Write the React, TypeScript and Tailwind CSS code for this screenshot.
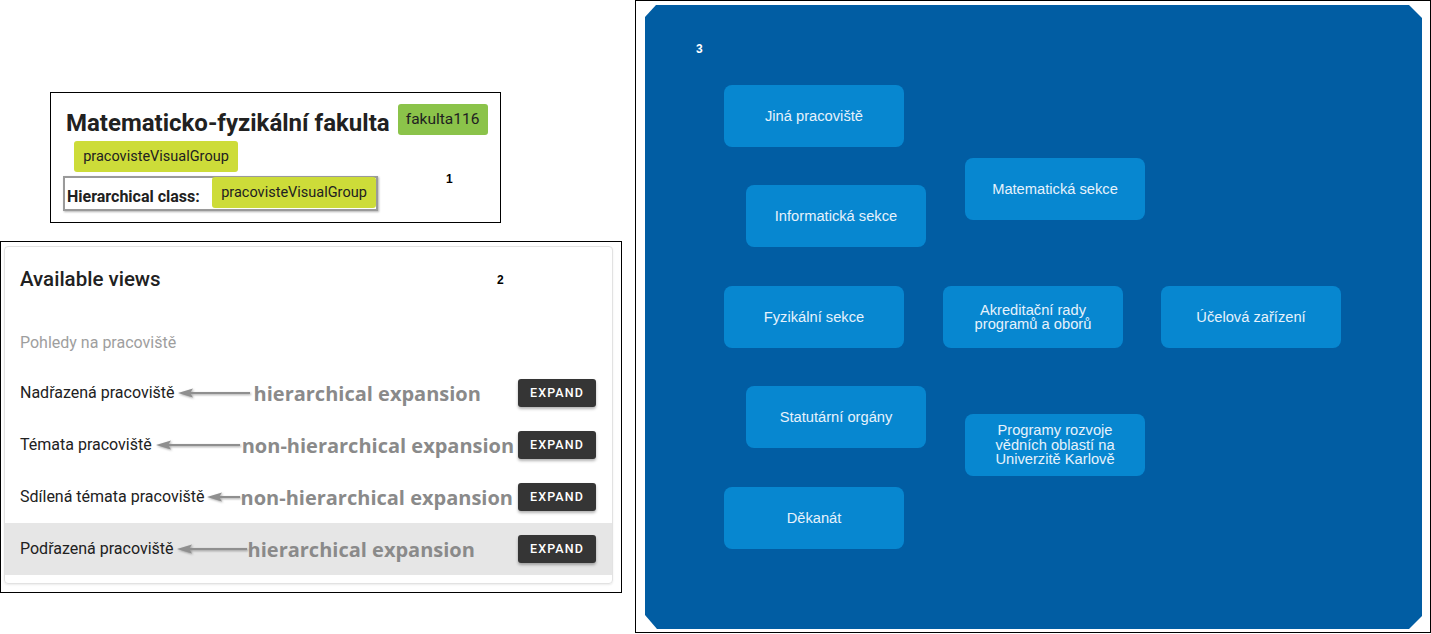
import React from "react";

function Arrow({ w }: { w: number }) {
  return (
    <svg width={w} height={12} viewBox={`0 0 ${w} 12`} className="shrink-0 drop-shadow-[1px_1px_1px_rgba(0,0,0,0.35)]">
      <line x1={10} y1={6} x2={w} y2={6} stroke="#8f8f8f" strokeWidth={2} />
      <path d="M0 6 L15 1.5 L12 6 L15 10.5 Z" fill="#8f8f8f" />
    </svg>
  );
}

type Row = { label: string; note: string; gapL: number; arrow: number; gapR: number; active?: boolean };

const rows: Row[] = [
  { label: "Nadřazená pracoviště", note: "hierarchical expansion", gapL: 3, arrow: 72, gapR: 4 },
  { label: "Témata pracoviště", note: "non-hierarchical expansion", gapL: 4, arrow: 84, gapR: 2 },
  { label: "Sdílená témata pracoviště", note: "non-hierarchical expansion", gapL: 2, arrow: 33, gapR: 1 },
  { label: "Podřazená pracoviště", note: "hierarchical expansion", gapL: 3, arrow: 70, gapR: 1, active: true },
];

type Node = { x: number; y: number; lines: string[] };
const nodes: Node[] = [
  { x: 79, y: 80, lines: ["Jiná pracoviště"] },
  { x: 101, y: 180, lines: ["Informatická sekce"] },
  { x: 320, y: 153, lines: ["Matematická sekce"] },
  { x: 79, y: 281, lines: ["Fyzikální sekce"] },
  { x: 298, y: 281, lines: ["Akreditační rady", "programů a oborů"] },
  { x: 516, y: 281, lines: ["Účelová zařízení"] },
  { x: 101, y: 381, lines: ["Statutární orgány"] },
  { x: 320, y: 409, lines: ["Programy rozvoje", "vědních oblastí na", "Univerzitě Karlově"] },
  { x: 79, y: 482, lines: ["Děkanát"] },
];

export default function App() {
  return (
    <div className="flex w-[1431px] h-[634px] bg-white overflow-hidden font-['Roboto',sans-serif] text-[#212121]">
      {/* Left column */}
      <div className="w-[622px] shrink-0 flex flex-col">
        {/* Panel 1 */}
        <div className="relative mt-[92px] ml-[50px] w-[451px] h-[131px] border border-black">
          <div className="flex items-start pt-[11px] pl-[15px]">
            <div className="mt-[3px] text-[24px] leading-[32px] font-bold text-[#212121]">
              Matematicko-fyzikální fakulta
            </div>
            <div className="ml-[8px] h-[31px] w-[90px] rounded-[3px] bg-[#8bc34a] flex items-center justify-center text-[15.5px] text-[#212121]">
              fakulta116
            </div>
          </div>
          <div className="mt-[2px] ml-[23px] h-[31px] w-[164px] rounded-[3px] bg-[#cddc39] flex items-center justify-center text-[14.5px] text-[#212121]">
            pracovisteVisualGroup
          </div>
          <div className="mt-[4px] ml-[12px] w-[315px] h-[35px] border-2 border-[#9a9a9a] shadow-[1px_1px_2px_rgba(0,0,0,0.3)] flex items-end justify-between">
            <span className="pl-[2px] pb-[2px] text-[16px] leading-[20px] font-bold text-[#212121]">Hierarchical class:</span>
            <div className="self-start mt-[-1px] h-[31px] w-[164px] rounded-[3px] bg-[#cddc39] flex items-center justify-center text-[14.5px] text-[#212121]">
              pracovisteVisualGroup
            </div>
          </div>
          <span className="absolute left-[395px] top-[77px] text-[12px] font-bold font-['Liberation_Sans',sans-serif] text-black">1</span>
        </div>

        {/* Panel 2 */}
        <div className="relative mt-[18px] w-[622px] h-[352px] border border-black">
          <div className="ml-[3px] mt-[4px] w-[609px] h-[338px] rounded-[4px] border border-[#e2e2e2] shadow-[0_1px_2px_rgba(0,0,0,0.08)] flex flex-col">
            <div className="pt-[18px] pl-[15px] h-[46px] text-[20.5px] leading-[28px] font-medium text-[#212121]">Available views</div>
            <div className="mt-[25px] h-[49px] pl-[15px] flex items-center text-[16px] text-[#9e9e9e]">Pohledy na pracoviště</div>
            {rows.map((r) => (
              <div
                key={r.label}
                className={`h-[52px] pl-[15px] pr-[16px] flex items-center ${r.active ? "bg-[#e6e6e6]" : ""}`}
              >
                <span className="text-[16px] leading-[24px] text-[#212121] whitespace-nowrap">{r.label}</span>
                <span style={{ marginLeft: r.gapL }} className="flex items-center">
                  <Arrow w={r.arrow} />
                </span>
                <span
                  style={{ marginLeft: r.gapR }}
                  className="font-['Open_Sans',sans-serif] font-bold text-[20px] leading-[28px] text-[#8a8a8a] whitespace-nowrap mt-[1px]"
                >
                  {r.note}
                </span>
                <button className="ml-auto w-[78px] h-[28px] rounded-[3px] bg-[#353535] text-white text-[12.5px] font-medium tracking-[0.09em] shadow-[0_2px_3px_rgba(0,0,0,0.3)]">
                  EXPAND
                </button>
              </div>
            ))}
          </div>
          <span className="absolute left-[496px] top-[29px] text-[12px] font-bold font-['Liberation_Sans',sans-serif] text-black">2</span>
        </div>
      </div>

      {/* Panel 3 */}
      <div className="ml-[13px] w-[796px] h-[633px] border border-black pl-[9px] pt-[4px] pr-[8px] pb-[3px] font-['Liberation_Sans',sans-serif]">
        <div className="relative w-full h-full bg-[#015da3] [clip-path:polygon(11px_0,calc(100%_-_13px)_0,100%_13px,100%_calc(100%_-_13px),calc(100%_-_13px)_100%,12px_100%,0_calc(100%_-_14px),0_12px)]">
          <span className="absolute left-[51px] top-[35px] text-[12px] font-bold text-white">3</span>
          {nodes.map((n) => (
            <div
              key={n.lines[0]}
              style={{ left: n.x, top: n.y }}
              className="absolute w-[180px] h-[62px] rounded-[8px] bg-[#0787d0] flex flex-col items-center justify-center text-center text-[14.7px] leading-[14.5px] text-[#e6f2fc]"
            >
              {n.lines.map((l) => (
                <span key={l}>{l}</span>
              ))}
            </div>
          ))}
        </div>
      </div>
    </div>
  );
}
